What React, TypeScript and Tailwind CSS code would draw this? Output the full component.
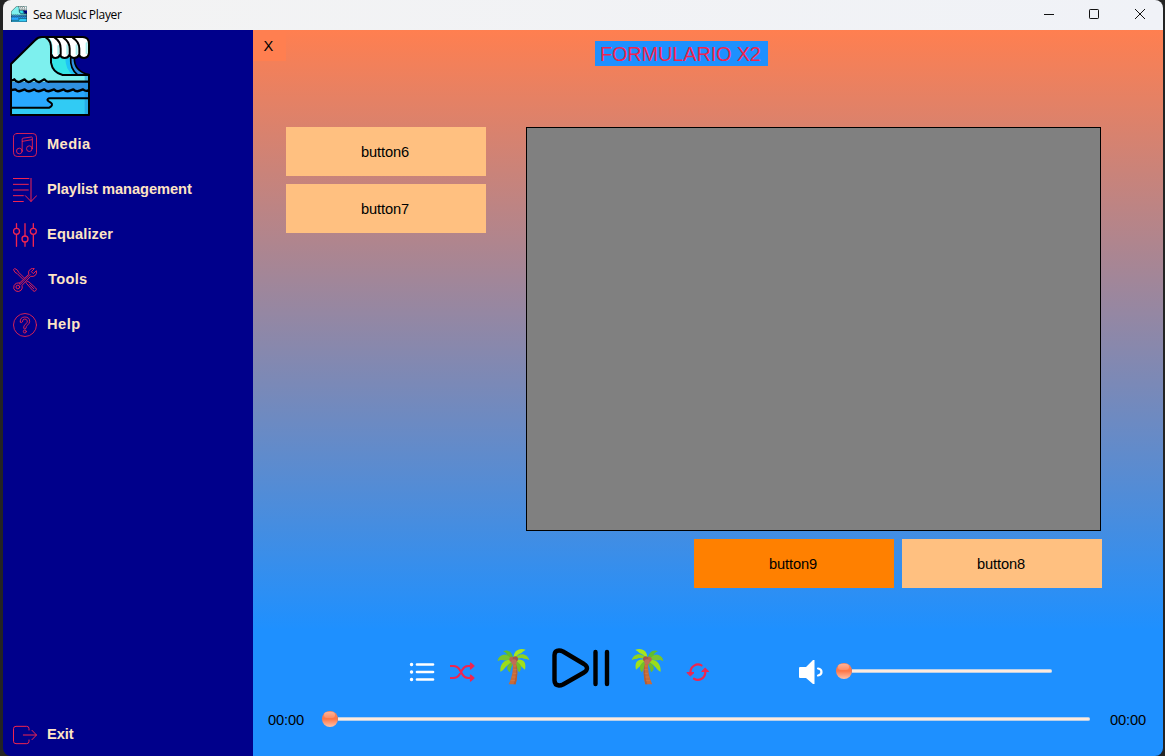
import type { ReactNode } from "react";

function WaveLogo({ className }: { className: string }) {
  return (
    <svg className={className} viewBox="0 0 240 240" fill="none" stroke="#000" strokeWidth="6" strokeLinejoin="round" strokeLinecap="round">
      <path d="M3 84 L76 12 Q84 3 96 3 H222 Q237 4 237 20 V52 Q234 66 222 66 L204 60 Q196 108 237 117 V237 H3Z" fill="#7df0ee" stroke="none" />
      <path d="M124 62 H240 V117 H152 Q126 110 124 80Z" fill="#00008b" stroke="none" />
      <path d="M124 62 H184 Q184 100 204 117 H152 Q126 110 124 80Z" fill="#35e6e6" stroke="none" />
      <path d="M166 66 H182 Q180 100 200 116 H188 Q166 100 166 66Z" fill="#20c4f5" stroke="none" />
      <path d="M182 66 H194 Q192 106 237 117 H206 Q180 100 182 66Z" fill="#2f8ee0" stroke="none" />
      <path d="M118 6 H222 Q237 8 237 24 V52 Q232 66 221 66 Q213 66 207 60 Q199 68 190 66 L180 60 Q172 68 162 66 L152 60 Q140 70 128 60 Q132 22 118 6Z" fill="#fff" stroke="none" />
      <path d="M145 30 V54 M172 28 V54 M200 28 V54 M230 22 V52" stroke="#a9efee" strokeWidth="6" />
      <path d="M3 138 H237 V165 H3Z" fill="#3090e2" stroke="none" />
      <path d="M3 165 H237 V237 H3Z" fill="#29a8ff" stroke="none" />
      <path d="M6 214 H120 Q134 204 120 198 Q108 190 118 187 H234 V234 H6Z" fill="#31cbf4" stroke="none" />
      <path d="M224 120 H234 V234 H224Z" fill="#2196dc" fillOpacity=".55" stroke="none" />
      <path d="M3 237 V84 L76 12 Q84 3 96 3 H218 Q237 3 237 24 V50 Q236 65 222 66 Q211 66 207 57 Q203 66 192 66 Q182 66 178 57 Q174 66 164 66 Q154 66 150 57 Q146 66 136 66 Q126 66 126 58 M237 117 V237 H3" />
      <path d="M108 5 Q124 14 123 40 V80 Q128 110 158 117 H237 M134 5 Q152 16 152 38 V55 M160 5 Q179 18 179 38 V55 M188 5 Q208 18 208 38 V55" />
      <path d="M182 66 Q180 98 202 116 M193 66 Q192 106 237 116" strokeWidth="5" />
      <path d="M5 133 Q10 133 13 130 Q20 141 30 137 L44 130 Q51 141 60 137 L73 130 Q82 141 90 137 L103 130 Q112 140 118 137 H235" strokeWidth="7" />
      <path d="M5 162 L16 160 Q24 169 34 164 L44 160 Q54 169 64 164 L73 160 Q83 169 93 164 L103 160 Q112 169 122 164 L132 160 Q141 169 151 164 L161 160 Q170 169 180 164 L190 160 Q199 169 209 164 L219 160 Q227 167 235 163" strokeWidth="7" />
      <path d="M5 215 H118 Q132 206 122 200 Q104 190 119 187 H235" />
    </svg>
  );
}

function LineIcon({ children, width = 3 }: { children: ReactNode; width?: number }) {
  return (
    <svg className="size-6 shrink-0" viewBox="0 0 72 72" fill="none" stroke="#f0254f" strokeWidth={width} strokeLinecap="round" strokeLinejoin="round">
      {children}
    </svg>
  );
}

const media = (
  <LineIcon width={2.6}>
    <rect x="1.5" y="1.5" width="69" height="69" rx="11" />
    <circle cx="19" cy="54" r="8.5" />
    <circle cx="49" cy="47" r="8.5" />
    <path d="M27.5 54 V18 Q27.5 16 30 15.500 L56 12 Q58 12 58 14 V47 M28 25 L57 20" />
  </LineIcon>
);
const playlist = (
  <LineIcon width={3}>
    <path d="M1 1.500 H48 M1 19 H46 M1 36 H46 M1 53 H31 M1 70.500 H31 M54 1 V70 M37 53 L54 70.500 L71 53" />
  </LineIcon>
);
const equalizer = (
  <LineIcon width={4}>
    <circle cx="10.500" cy="25" r="9" />
    <circle cx="36" cy="48" r="9" />
    <circle cx="61" cy="25" r="9" />
    <path d="M10.500 2 V16 M10.500 34 V70 M36 2 V39 M36 57 V70 M61 2 V16 M61 34 V70" />
  </LineIcon>
);
const tools = (
  <LineIcon width={2.8}>
    <path d="M29 33 L13 17 L6 13 L1.500 5 L5 1.500 L13 6 L17 13 L33 29 M40 43 L43 40 L48 42 L68 60 Q73 64 68 68 Q64 72 60 68 L42 48Z M50 50 L62 62" />
    <path d="M20 45 L47 19 Q44 8 53 3 Q59 0 64 2 L55 11 L61 17 L70 8 Q73 16 67 22 Q61 27 53 25 L27 52 Q30 61 24 67 Q17 73 8 69 Q-1 63 3 53 Q8 43 20 45Z M21 50 L51 20" />
    <circle cx="14.500" cy="57" r="5.500" />
  </LineIcon>
);
const help = (
  <LineIcon width={2.6}>
    <circle cx="36" cy="36" r="34.500" />
    <path d="M22 27 Q20 13 35 12 Q50 12 50 25 Q50 31 43 37 Q39 40 39 46 Q36 50 32 46 Q31 38 38 33 Q44 28 43 24 Q41 18 35 18 Q29 18 28 27 Q25 31 22 27Z" />
    <circle cx="35.500" cy="55.500" r="4.500" />
  </LineIcon>
);
const exit = (
  <LineIcon>
    <path d="M48 21 V17 Q48 10 41 10 H9 Q1.500 10 1.500 17 V55 Q1.500 62 9 62 H41 Q48 62 48 55 V51 M31 36 H70 M57 22 L70.500 36 L57 50" />
  </LineIcon>
);

function MenuItem({ icon, label, textClass = "" }: { icon: ReactNode; label: string; textClass?: string }) {
  return (
    <div className="flex h-[45px] items-center gap-[10px] pl-[10px] text-[14.67px] font-bold text-[#ffe4c4]">
      {icon}
      <span className={`-mt-px whitespace-nowrap ${textClass}`}>{label}</span>
    </div>
  );
}

function PanelButton({ label, active = false }: { label: string; active?: boolean }) {
  return (
    <button className={`h-[49px] w-[200px] shrink-0 pr-[2px] text-[14.67px] tracking-[-0.1px] ${active ? "bg-[#ff8000]" : "bg-[#ffc080]"}`}>
      {label}
    </button>
  );
}

function Palm({ className }: { className: string }) {
  return (
    <svg className={`h-12 w-[33px] shrink-0 ${className}`} viewBox="0 0 99 144">
      <path d="M47 50 L58 48 Q66 84 56 121 H35 Q51 88 47 50Z" fill="#c76b3b" />
      <path d="M57 54 Q65 88 56 121 H50 Q60 89 57 54Z" fill="#b05f38" />
      <path d="M49 66 H57 M49 77 H59 M48 88 H58 M45 99 H56 M41 110 H54" stroke="#d88048" strokeWidth="2" />
      <path d="M48 48 C39 29 16 25 1 47 C11 41 18 42 23 43 C31 43 39 48 48 48Z" fill="#63ba28" />
      <path d="M48 46 C30 26 6 28 2 52 C14 44 22 52 30 48Z" fill="#79c42f" />
      <path d="M48 48 C24 44 8 58 10 83 C17 80 20 76 24 71 C30 66 32 62 40 58Z" fill="#9bdd19" />
      <path d="M44 55 C27 64 27 78 39 85 C41 76 42 70 47 62Z" fill="#6dbb2c" />
      <path d="M49 45 C47 24 30 14 18 22 C26 25 29 29 33 36Z" fill="#5fbe2c" />
      <path d="M50 46 C48 20 66 10 86 17 C80 22 76 23 72 28 C64 30 59 36 50 46Z" fill="#a9e51d" />
      <path d="M52 45 C64 24 92 26 97 49 C88 43 82 47 76 42 C68 41 61 45 52 45Z" fill="#8fd220" />
      <path d="M55 48 C76 42 90 52 84 77 C79 74 75 68 71 66 C68 60 62 55 55 48Z" fill="#a0e01c" />
      <path d="M55 52 C72 57 77 70 67 85 C62 79 61 73 59 65Z" fill="#73bf27" />
      <circle cx="45" cy="46" r="8" fill="#b76452" />
      <circle cx="55" cy="45" r="8" fill="#a3564a" />
      <circle cx="51" cy="54" r="8" fill="#c06d58" />
    </svg>
  );
}

function Slider({ trackClass }: { trackClass: string }) {
  return (
    <div className="flex items-center">
      <div className="flex h-4 w-4 shrink-0 flex-col items-center rounded-full bg-linear-to-b from-[#ff8a60] via-[#ff7645] to-[#ffc0a8] pt-px">
        <div className="h-[6px] w-[11px] rounded-full bg-linear-to-b from-[#ffb093] to-[#ff8d65]" />
      </div>
      <div className={`h-1 rounded-r-full border-y border-[#b9cfe8] bg-[#fdeadd] ${trackClass}`} />
    </div>
  );
}

export default function App() {
  return (
    <div className="h-[756px] w-[1165px] overflow-hidden bg-[#242424] pl-[3px] font-['Liberation_Sans',Arial,sans-serif] text-black">
      <div className="flex h-full w-[1160px] flex-col overflow-hidden rounded-[8px]">
        <header className="flex h-[30px] shrink-0 items-center bg-linear-to-r from-[#f3f3f3] to-[#f0f2f7] pl-2">
          <WaveLogo className="-mt-[2px] size-4" />
          <span className="ml-[6px] flex-1 font-['Open_Sans','Noto_Sans',sans-serif] text-[12px] tracking-[-0.3px]">Sea Music Player</span>
          <svg className="h-[30px] w-[119px]" viewBox="0 0 119 30" fill="none" stroke="#111" strokeWidth="1">
            <path d="M0 14.500 H10" />
            <rect x="45.500" y="9.500" width="9" height="9" rx=".7" />
            <path d="M91 9 L101 19 M101 9 L91 19" />
          </svg>
        </header>
        <div className="flex min-h-0 flex-1">
          <aside className="flex w-[250px] shrink-0 flex-col bg-[#00008b]">
            <WaveLogo className="ml-[7px] mt-[6px] size-20" />
            <nav className="mt-[6px]">
              <MenuItem icon={media} label="Media" textClass="tracking-[0.4px]" />
              <MenuItem icon={playlist} label="Playlist management" textClass="tracking-[-0.05px]" />
              <MenuItem icon={equalizer} label="Equalizer" textClass="tracking-[0.1px]" />
              <MenuItem icon={tools} label="Tools" textClass="pl-px tracking-[0.3px]" />
              <MenuItem icon={help} label="Help" textClass="tracking-[0.5px]" />
            </nav>
            <div className="-mb-px mt-auto">
              <MenuItem icon={exit} label="Exit" textClass="tracking-[-0.1px]" />
            </div>
          </aside>
          <div className="flex w-[910px] flex-col bg-[#1e90ff]">
            <main className="h-[600px] shrink-0 bg-linear-to-b/srgb from-[#ff7f50] to-[#1e90ff]">
              <div className="flex h-[97px] items-start">
                <button className="h-[31px] w-[33px] bg-[#ff7f50] pr-[2px] text-[14.67px]">X</button>
                <h1 className="ml-[309px] mt-[11px] h-[25px] w-[173px] whitespace-nowrap bg-[#1e90ff] pl-[5px] text-[20px] leading-[26px] tracking-[-0.2px] text-[#f0254f]">FORMULARIO X2</h1>
              </div>
              <div className="flex gap-10 pl-[33px]">
                <div className="flex flex-col gap-2">
                  <PanelButton label="button6" />
                  <PanelButton label="button7" />
                </div>
                <div className="flex w-[576px] flex-col">
                  <div className="h-[404px] w-[575px] border border-black bg-[#808080]" />
                  <div className="mt-2 flex justify-end gap-2">
                    <PanelButton label="button9" active />
                    <PanelButton label="button8" />
                  </div>
                </div>
              </div>
            </main>
            <footer className="pt-[14px]">
              <div className="flex h-12 pl-[156px]">
                <svg className="h-12 w-[26px] shrink-0" viewBox="0 0 26 48" stroke="#fff" strokeWidth="2.700" strokeLinecap="round">
                  <path d="M8 20.500 H24 M8 28 H24 M8 35.500 H24" />
                  <path d="M2.500 20.500 H2.600 M2.500 28 H2.600 M2.500 35.500 H2.600" strokeWidth="3.400" />
                </svg>
                <svg className="ml-[14px] h-12 w-[26px] shrink-0" viewBox="0 0 26 48" fill="none" stroke="#f0254f" strokeWidth="2.100" strokeLinejoin="round">
                  <path d="M1 22 H4 Q8.500 22 10.500 25.500 L13.500 30.500 Q15.500 34 19 34 H22 M1 34 H4 Q8.500 34 10.500 30.500 L13.500 25.500 Q15.500 22 19 22 H22" />
                  <path d="M21.500 19 L25 22 L21.500 25Z M21.500 31 L25 34 L21.500 37Z" fill="#f0254f" strokeWidth="1.200" />
                </svg>
                <Palm className="ml-[22px]" />
                <svg className="ml-[22px] h-12 w-[58px] shrink-0" viewBox="0 0 58 48" fill="none" stroke="#000" strokeWidth="4.400" strokeLinecap="round" strokeLinejoin="round">
                  <path d="M2.500 11 Q2.500 6.500 7 6.500 Q9 6.500 11 7.500 L32 20 Q38 24 32 28.500 L11 40.500 Q9 41.500 7 41.500 Q2.500 41 2.500 36.500Z M43.500 8 V40 M55 8 V40" />
                </svg>
                <Palm className="ml-[21px] -scale-x-100" />
                <svg className="ml-[22px] h-12 w-[24px] shrink-0" viewBox="0 0 24 48" fill="none" stroke="#f0254f" strokeWidth="2.200" strokeLinecap="round" strokeLinejoin="round">
                  <path d="M4.500 28 A7.500 7.500 0 0 1 15.500 21.400 M19.300 28 A7.500 7.500 0 0 1 8 34.700" />
                  <path d="M1.300 28.600 H8 L4.600 31.800Z M16 27.500 H22.800 L19.400 24.300Z" fill="#f0254f" strokeWidth="1" />
                </svg>
                <svg className="ml-[89px] h-12 w-[25px] shrink-0" viewBox="0 0 25 48" fill="#fff">
                  <path d="M1 23 H7 L14 16 H15.500 V40 H14 L7 34 H1 Q0 34 0 33 V24 Q0 23 1 23Z" />
                  <path d="M19 24.500 Q22.500 25 22.500 28 Q22.500 31 19 31.500" fill="none" stroke="#fff" strokeWidth="2.200" strokeLinecap="round" />
                </svg>
                <div className="ml-[11.5px] mt-[19px]">
                  <Slider trackClass="w-[200px]" />
                </div>
              </div>
              <div className="flex h-[54px] items-center pl-[15px] text-[14.67px]">
                <span className="w-[53.5px] pt-px tracking-[-0.15px]">00:00</span>
                <Slider trackClass="w-[752px]" />
                <span className="ml-[20.5px] pt-px tracking-[-0.15px]">00:00</span>
              </div>
            </footer>
          </div>
        </div>
      </div>
    </div>
  );
}
